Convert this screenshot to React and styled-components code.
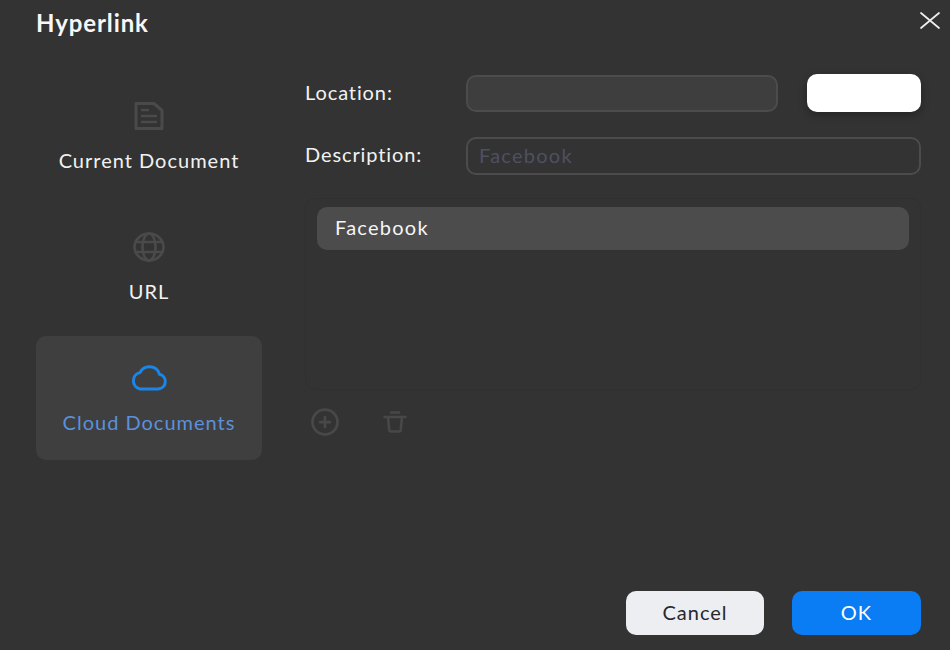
import React from "react";
import styled, { createGlobalStyle } from "styled-components";
import { CirclePlus } from "lucide-react";

const GlobalStyle = createGlobalStyle`
  html, body {
    margin: 0;
    padding: 0;
    background: #333333;
  }
  * {
    box-sizing: border-box;
  }
`;

const Dialog = styled.div`
  width: 950px;
  height: 650px;
  overflow: hidden;
  display: flex;
  flex-direction: column;
  padding: 0 29px 15px 36px;
  background: #333333;
  color: #f5f5f5;
  font-family: "Lato", "Liberation Sans", sans-serif;
`;

const Header = styled.header`
  height: 74px;
  display: flex;
  justify-content: space-between;
  align-items: flex-start;
`;

const Title = styled.h1`
  margin: 9px 0 0;
  font-size: 24px;
  line-height: 27px;
  font-weight: 700;
  letter-spacing: 0.9px;
  color: #f7f7f7;
`;

const CloseButton = styled.button`
  width: 22px;
  height: 20px;
  margin: 10px -20px 0 0;
  padding: 0;
  border: 0;
  background: none;
  color: #efefef;
`;

const Body = styled.div`
  flex: 1;
  display: flex;
  gap: 43px;
`;

const Sidebar = styled.nav`
  width: 226px;
  display: flex;
  flex-direction: column;
  gap: 7px;
`;

const Tab = styled.div`
  height: 124px;
  display: flex;
  flex-direction: column;
  align-items: center;
  padding-top: 24px;
  border-radius: 10px;
  background: ${(p) => (p.$active ? "#3f3f3f" : "transparent")};
  color: ${(p) => (p.$active ? "#5b91dc" : "#f2f2f2")};
  font-size: 20px;
  letter-spacing: 1px;
`;

const TabIcon = styled.div`
  height: 36px;
  display: flex;
  align-items: center;
  justify-content: center;
  color: ${(p) => (p.$active ? "#1b86ea" : "#4a4a4a")};
`;

const TabLabel = styled.span`
  margin-top: 14px;
  line-height: 24px;
`;

const Panel = styled.main`
  flex: 1;
  display: flex;
  flex-direction: column;
`;

const Row = styled.div`
  display: flex;
  align-items: flex-end;
  margin-top: ${(p) => p.$top || 0}px;
`;

const FieldLabel = styled.label`
  width: 161px;
  align-self: center;
  margin-bottom: ${(p) => p.$lift || 2}px;
  font-size: 20px;
  letter-spacing: 0.9px;
  color: #f2f2f2;
`;

const Field = styled.div`
  flex: 1;
  height: ${(p) => (p.$filled ? 37 : 38)}px;
  display: flex;
  align-items: center;
  padding: 0 11px 2px;
  border: 2px solid #4c4c4c;
  border-radius: 10px;
  background: ${(p) => (p.$filled ? "#3e3e3e" : "transparent")};
  color: #4e5062;
  font-size: 20px;
  letter-spacing: 1.25px;
`;

const BrowseButton = styled.button`
  width: 114px;
  height: 38px;
  margin-left: 29px;
  border: 0;
  border-radius: 10px;
  background: #ffffff;
  box-shadow: 0 3px 8px rgba(0, 0, 0, 0.3);
`;

const LinkList = styled.div`
  height: 192px;
  margin-top: 23px;
  padding: 8px 11px;
  border: 1px solid #303030;
  border-radius: 10px;
`;

const LinkItem = styled.div`
  height: 43px;
  display: flex;
  align-items: center;
  padding: 0 0 4px 18px;
  border-radius: 10px;
  background: #4c4c4c;
  color: #f5f5f5;
  font-size: 20px;
  letter-spacing: 1.25px;
`;

const ListTools = styled.div`
  display: flex;
  align-items: center;
  gap: 43px;
  margin-top: 17px;
  padding-left: 5px;
  color: #484848;
`;

const Footer = styled.div`
  margin-top: auto;
  display: flex;
  justify-content: flex-end;
  gap: 28px;
`;

const ActionButton = styled.button`
  width: ${(p) => (p.$primary ? 129 : 138)}px;
  height: 44px;
  padding: 0 0 3px;
  border: 0;
  border-radius: 10px;
  background: ${(p) => (p.$primary ? "#0a7df5" : "#eceef2")};
  color: ${(p) => (p.$primary ? "#ffffff" : "#26282c")};
  font-family: inherit;
  font-size: 20px;
  letter-spacing: 1px;
`;

function FileIcon() {
  return (
    <svg width="30" height="28" viewBox="0 0 30 28" fill="none" stroke="currentColor" strokeWidth="3" strokeLinejoin="round">
      <path d="M2 1.5h18l8 7v18H2z" />
      <path d="M7 8h8M7 14h16M7 20h16" strokeWidth="2.6" />
    </svg>
  );
}

function GlobeIcon() {
  return (
    <svg width="32" height="30" viewBox="0 0 32 30" fill="none" stroke="currentColor" strokeWidth="2.6">
      <ellipse cx="16" cy="15" rx="14.5" ry="13.5" />
      <ellipse cx="16" cy="15" rx="6.5" ry="13.5" />
      <path d="M3 10h26M3 20h26" />
    </svg>
  );
}

function CloudIcon() {
  return (
    <svg width="38" height="28" viewBox="0 0 38 28" fill="none" stroke="currentColor" strokeWidth="3" strokeLinejoin="round">
      <path d="M10 25h18a7.5 7.5 0 0 0 1.5-14.8A10.5 10.5 0 0 0 10 8.6 8.4 8.4 0 0 0 10 25z" />
    </svg>
  );
}

function TrashIcon() {
  return (
    <svg width="24" height="22" viewBox="0 0 24 22" fill="none" stroke="currentColor" strokeWidth="2.6" strokeLinecap="round" strokeLinejoin="round">
      <path d="M8 1.5h8M1.5 6h21" />
      <path d="M5 6l1.2 12.5a2 2 0 0 0 2 2h7.6a2 2 0 0 0 2-2L19 6" />
    </svg>
  );
}

function CloseIcon() {
  return (
    <svg width="22" height="20" viewBox="0 0 22 20" fill="none" stroke="currentColor" strokeWidth="1.7" strokeLinecap="round">
      <path d="M2 3l18 15M20 3L2 18" />
    </svg>
  );
}

export default function App() {
  return (
    <>
      <GlobalStyle />
      <Dialog>
        <Header>
          <Title>Hyperlink</Title>
          <CloseButton aria-label="Close">
            <CloseIcon />
          </CloseButton>
        </Header>
        <Body>
          <Sidebar>
            <Tab>
              <TabIcon>
                <FileIcon />
              </TabIcon>
              <TabLabel>Current Document</TabLabel>
            </Tab>
            <Tab>
              <TabIcon>
                <GlobeIcon />
              </TabIcon>
              <TabLabel>URL</TabLabel>
            </Tab>
            <Tab $active>
              <TabIcon $active>
                <CloudIcon />
              </TabIcon>
              <TabLabel>Cloud Documents</TabLabel>
            </Tab>
          </Sidebar>
          <Panel>
            <Row>
              <FieldLabel>Location:</FieldLabel>
              <Field $filled />
              <BrowseButton aria-label="Browse" />
            </Row>
            <Row $top={25}>
              <FieldLabel $lift={4}>Description:</FieldLabel>
              <Field>Facebook</Field>
            </Row>
            <LinkList>
              <LinkItem>Facebook</LinkItem>
            </LinkList>
            <ListTools>
              <CirclePlus size={30} strokeWidth={2.2} />
              <TrashIcon />
            </ListTools>
            <Footer>
              <ActionButton>Cancel</ActionButton>
              <ActionButton $primary>OK</ActionButton>
            </Footer>
          </Panel>
        </Body>
      </Dialog>
    </>
  );
}
